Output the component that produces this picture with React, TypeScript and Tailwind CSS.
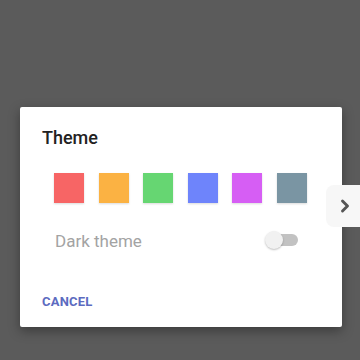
import { ChevronRight } from "lucide-react";

const swatches = ["#f76565", "#fbb243", "#66d672", "#6e84fb", "#d65ef4", "#7a95a3"];

export default function App() {
  return (
    <div className="relative w-[360px] h-[360px] bg-[#5b5b5b] pt-[107px] pl-[20px] font-['Roboto',sans-serif]">
      {/* Dialog */}
      <div className="w-[322px] h-[220px] bg-white rounded-[2px] shadow-[0_4px_12px_rgba(0,0,0,0.35)] flex flex-col px-[22px] pt-[19px]">
        <div className="text-[18px] leading-[24px] font-medium text-[#222]">Theme</div>

        <div className="flex gap-[14.6px] pl-[12px] mt-[23px]">
          {swatches.map((c) => (
            <div
              key={c}
              className="w-[30px] h-[30px] shadow-[0_1px_2px_rgba(0,0,0,0.15)]"
              style={{ backgroundColor: c }}
            />
          ))}
        </div>

        <div className="flex items-center mt-[26px] pl-[13px] pr-[22px]">
          <span className="text-[17px] leading-[24px] text-[#a3a3a3]">Dark theme</span>
          <div className="relative ml-auto w-[33px] h-[18px] -mt-[3px]">
            <div className="absolute right-0 top-[3px] w-[28px] h-[12px] rounded-full bg-[#c2c2c2]" />
            <div className="absolute left-0 top-0 w-[18px] h-[18px] rounded-full bg-[#f1f1f1] shadow-[0_1px_2px_rgba(0,0,0,0.25)]" />
          </div>
        </div>

        <div className="mt-[41px] text-[13px] leading-[16px] font-bold tracking-[0.2px] text-[#5c6bc0]">CANCEL</div>
      </div>

      {/* Side tab */}
      <div className="absolute left-[326px] top-[185px] w-[34px] h-[42px] bg-[#f7f7f7] rounded-l-[8px] flex items-center justify-center">
        <ChevronRight size={20} strokeWidth={3.5} color="#555" className="ml-[3px]" />
      </div>
    </div>
  );
}
